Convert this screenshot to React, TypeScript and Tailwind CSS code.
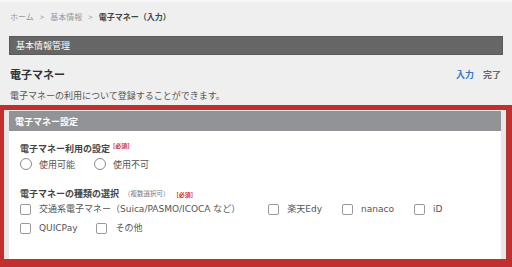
import React from 'react';

const font = "font-['Noto_Sans_CJK_JP','Noto_Sans',sans-serif]";

function Radio({ label }: { label: string }) {
  return (
    <label className="flex items-center gap-[7px]">
      <span className="w-[12px] h-[12px] rounded-full border-[1.5px] border-[#8a8a8a] bg-white" />
      <span className="text-[9px] text-[#555]">{label}</span>
    </label>
  );
}

function Check({ label, className = '' }: { label: string; className?: string }) {
  return (
    <label className={`flex items-center gap-[8px] ${className}`}>
      <span className="w-[11px] h-[11px] rounded-[2px] border border-[#9a9a9a] bg-white" />
      <span className="text-[9px] text-[#555] font-['DejaVu_Sans','Noto_Sans_CJK_JP',sans-serif]">{label}</span>
    </label>
  );
}

function Required() {
  return <span className="text-[6px] font-bold text-[#d0312d] ml-[3px] -translate-y-[2px]">[必須]</span>;
}

export default function App() {
  return (
    <div className={`w-[512px] h-[267px] bg-[#efefef] overflow-hidden flex flex-col leading-none ${font}`}>
      <div className="h-[2px] bg-[#f8f8f8] shrink-0" />

      {/* Breadcrumb */}
      <div className="h-[30px] shrink-0 flex items-center px-[10px] text-[8px] text-[#999] gap-[6px]">
        <span>ホーム</span>
        <span>&gt;</span>
        <span>基本情報</span>
        <span>&gt;</span>
        <span className="font-bold text-[#444]">電子マネー（入力）</span>
      </div>

      {/* Section bar */}
      <div className="mt-[4px] mx-[9px] h-[19px] shrink-0 bg-[#666667] border border-[#5a5a5a] flex items-center px-[6px] text-[9px] text-white">
        基本情報管理
      </div>

      {/* Title row */}
      <div className="mt-[9px] h-[20px] shrink-0 flex items-center justify-between pl-[10px] pr-[11px]">
        <span className="text-[11px] font-bold text-[#333]">電子マネー</span>
        <div className="flex items-center gap-[9px] text-[9px] font-bold">
          <span className="text-[#3a78c6]">入力</span>
          <span className="text-[#666]">完了</span>
        </div>
      </div>
      <div className="mt-[4px] h-[14px] shrink-0 flex items-center pl-[10px] text-[9px] text-[#555]">
        電子マネーの利用について登録することができます。
      </div>

      {/* Highlighted settings panel */}
      <div className="mt-[3px] flex-1 flex flex-col border-t-[5px] border-l-[4px] border-r-[6px] border-b-[8px] border-[#c0302e] bg-[#e8e8e8] pt-[1px] pl-[5px] pr-[5px]">
        <div className="flex-1 bg-white flex flex-col">
          <div className="h-[20px] shrink-0 bg-[#929396] flex items-center px-[6px] text-[9px] font-bold text-white">
            電子マネー設定
          </div>
          <div className="pl-[11px] flex flex-col">
            <div className="mt-[11px] h-[12px] flex items-center text-[9px] font-bold text-[#444]">
              電子マネー利用の設定
              <Required />
            </div>
            <div className="mt-[3px] h-[14px] flex items-center gap-[19px]">
              <Radio label="使用可能" />
              <Radio label="使用不可" />
            </div>

            <div className="mt-[16px] h-[12px] flex items-center text-[9px] font-bold text-[#444]">
              電子マネーの種類の選択
              <span className="font-normal text-[6.5px] text-[#777] ml-[5px]">（複数選択可）</span>
              <span className="ml-[4px]"><Required /></span>
            </div>
            <div className="mt-[3px] h-[14px] flex items-center gap-[20px]">
              <Check label="交通系電子マネー（Suica/PASMO/ICOCA など）" className="mr-[8px]" />
              <Check label="楽天Edy" />
              <Check label="nanaco" />
              <Check label="iD" />
            </div>
            <div className="mt-[5px] h-[14px] flex items-center gap-[19px]">
              <Check label="QUICPay" />
              <Check label="その他" />
            </div>
          </div>
        </div>
      </div>
    </div>
  );
}
